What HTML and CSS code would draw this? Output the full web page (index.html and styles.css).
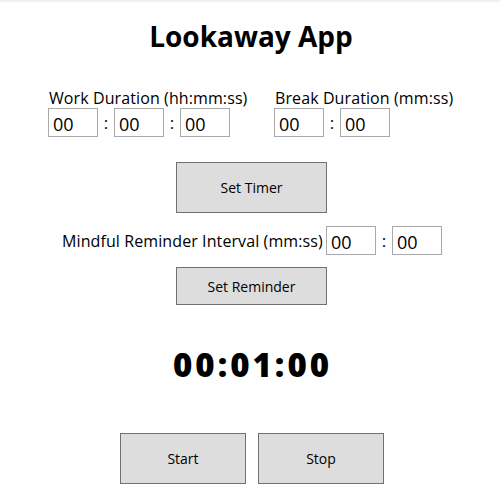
FILE: index.html
```html
<!DOCTYPE html>
<html>
<head>
<meta charset="utf-8">
<link rel="stylesheet" href="styles.css">
</head>
<body>
<div class="topbar"></div>
<h1 class="title">Lookaway App</h1>
<div class="durations">
  <div class="group work">
    <div class="label">Work Duration (hh:mm:ss)</div>
    <div class="fields">
      <input class="box" value="00"><span class="colon">:</span><input class="box" value="00"><span class="colon">:</span><input class="box" value="00">
    </div>
  </div>
  <div class="group brk">
    <div class="label">Break Duration (mm:ss)</div>
    <div class="fields">
      <input class="box" value="00"><span class="colon">:</span><input class="box" value="00">
    </div>
  </div>
</div>
<div class="btnrow"><button class="btn set-timer">Set Timer</button></div>
<div class="mindful">
  <span class="label">Mindful Reminder Interval (mm:ss)</span>
  <input class="box" value="00"><span class="colon">:</span><input class="box" value="00">
</div>
<div class="btnrow"><button class="btn set-rem">Set Reminder</button></div>
<div class="clock">00:01:00</div>
<div class="controls">
  <button class="btn ctl">Start</button>
  <button class="btn ctl">Stop</button>
</div>
</body>
</html>
```
FILE: styles.css
```css
html, body {
  margin: 0;
  padding: 0;
  background: #ffffff;
  font-family: "Open Sans", "Noto Sans", sans-serif;
  color: #000;
}
.topbar {
  height: 2px;
  background: #f4f0f2;
}
.title {
  margin: 15px 0 0 0;
  text-align: center;
  font-size: 28px;
  line-height: 38px;
  font-weight: 700;
  padding-left: 2px;
}
.durations {
  display: flex;
  padding-left: 48px;
  margin-top: 33px;
}
.group .label {
  font-size: 16px;
  line-height: 20px;
  padding-left: 1px;
  letter-spacing: 0.1px;
  white-space: nowrap;
}
.work { width: 226px; }
.fields {
  display: flex;
  align-items: center;
}
.box {
  box-sizing: border-box;
  width: 50px;
  height: 29px;
  border: 1px solid #a9a9a9;
  padding: 2px 0 0 4px;
  font-family: "Open Sans", "Noto Sans", sans-serif;
  font-size: 18px;
  color: #000;
  margin: 0;
  outline: none;
}
.colon {
  width: 16px;
  text-align: center;
  font-size: 17px;
}
.btnrow {
  display: flex;
  padding-left: 176px;
}
.btn {
  box-sizing: border-box;
  background: #dddddd;
  border: 1px solid #707070;
  font-family: "Open Sans", "Noto Sans", sans-serif;
  font-size: 14px;
  color: #000;
  padding: 0;
  margin: 0;
}
.set-timer {
  width: 151px;
  height: 51px;
  margin-top: 25px;
}
.mindful {
  display: flex;
  align-items: center;
  padding-left: 62px;
  margin-top: 13px;
}
.mindful .label {
  font-size: 16px;
  letter-spacing: 0.1px;
  width: 264px;
  white-space: nowrap;
}
.set-rem {
  width: 151px;
  height: 38px;
  margin-top: 12px;
}
.clock {
  text-align: center;
  font-size: 33px;
  font-weight: 800;
  letter-spacing: 3px;
  line-height: 46px;
  margin-top: 37px;
  padding-left: 5px;
}
.controls {
  display: flex;
  padding-left: 120px;
  gap: 12px;
  margin-top: 45px;
}
.ctl {
  width: 126px;
  height: 51px;
}
```
